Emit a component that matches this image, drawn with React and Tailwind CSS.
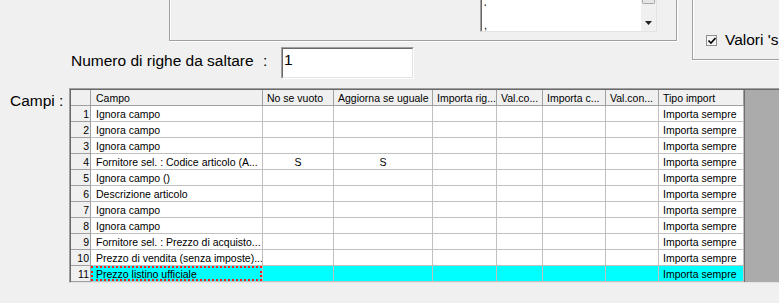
import React from "react";

const cols = [
  { w: "w-[172px]", label: "Campo", pl: "pl-[5px]" },
  { w: "w-[71px]", label: "No se vuoto", pl: "pl-[4px]" },
  { w: "w-[99px]", label: "Aggiorna se uguale", pl: "pl-[4px]" },
  { w: "w-[64px]", label: "Importa rig...", pl: "pl-[4px]" },
  { w: "w-[46px]", label: "Val.co...", pl: "pl-[4px]" },
  { w: "w-[63px]", label: "Importa c...", pl: "pl-[4px]" },
  { w: "w-[53px]", label: "Val.con...", pl: "pl-[4px]" },
  { w: "w-[85px]", label: "Tipo import", pl: "pl-[4px]" },
];

const rows = [
  ["Ignora campo", "", ""],
  ["Ignora campo", "", ""],
  ["Ignora campo", "", ""],
  ["Fornitore sel. : Codice articolo (A...", "S", "S"],
  ["Ignora campo ()", "", ""],
  ["Descrizione articolo", "", ""],
  ["Ignora campo", "", ""],
  ["Ignora campo", "", ""],
  ["Fornitore sel. : Prezzo di acquisto...", "", ""],
  ["Prezzo di vendita (senza imposte)...", "", ""],
  ["Prezzo listino ufficiale", "", ""],
];

function HeaderRow() {
  return (
    <div className="flex h-[16px]">
      <div className="w-[20px] shrink-0 border-r border-b border-[#a0a0a0] bg-[#f0f0f0]" />
      {cols.map((c, i) => (
        <div
          key={i}
          className={`${c.w} ${c.pl} shrink-0 border-r border-b border-[#a0a0a0] bg-[#f0f0f0] leading-[16px] whitespace-nowrap overflow-hidden`}
        >
          {c.label}
        </div>
      ))}
    </div>
  );
}

function DataRow({ n, r }) {
  const sel = n === 11;
  const bg = sel ? "bg-[#00ffff]" : "bg-white";
  const [campo, a, b] = r;
  return (
    <div className="flex h-[16px]">
      <div className="w-[20px] shrink-0 border-r border-b border-[#a0a0a0] bg-[#f0f0f0] text-right pr-[1px] leading-[16px]">
        {n}
      </div>
      <div className={`w-[172px] shrink-0 border-r border-b border-[#c0c0c0] ${bg} whitespace-nowrap overflow-hidden`}>
        {sel ? (
          <div className="h-[15px] border-2 border-dotted border-[#ff1a1a] pl-[3px] leading-[12px]">{campo}</div>
        ) : (
          <div className="pl-[5px] leading-[16px]">{campo}</div>
        )}
      </div>
      <div className={`w-[71px] shrink-0 border-r border-b border-[#c0c0c0] ${bg} text-center leading-[16px]`}>{a}</div>
      <div className={`w-[99px] shrink-0 border-r border-b border-[#c0c0c0] ${bg} text-center leading-[16px]`}>{b}</div>
      <div className={`w-[64px] shrink-0 border-r border-b border-[#c0c0c0] ${bg}`} />
      <div className={`w-[46px] shrink-0 border-r border-b border-[#c0c0c0] ${bg}`} />
      <div className={`w-[63px] shrink-0 border-r border-b border-[#c0c0c0] ${bg}`} />
      <div className={`w-[53px] shrink-0 border-r border-b border-[#c0c0c0] ${bg}`} />
      <div className={`w-[85px] shrink-0 border-r border-b border-[#c0c0c0] ${bg} pl-[4px] leading-[16px] whitespace-nowrap`}>
        Importa sempre
      </div>
    </div>
  );
}

export default function App() {
  return (
    <div className="w-[779px] h-[303px] overflow-hidden bg-[#f0f0f0] text-black font-['Liberation_Sans',Arial,sans-serif]">
      {/* top area */}
      <div className="flex h-[88px]">
        <div className="w-[692px] shrink-0 flex flex-col">
          <div className="flex h-[42px]">
            <div className="w-[169px] shrink-0" />
            <div className="w-[508px] h-[41px] border-l border-r border-b border-[#a0a0a0] shadow-[inset_1px_0_0_#fff,1px_1px_0_#fff] flex">
              <div className="ml-[310px] w-[177px] h-[32px] flex bg-white border-l border-r border-b border-l-[#a0a0a0] border-r-[#e3e3e3] border-b-[#e3e3e3]">
                <div className="w-[160px] border-l border-[#696969] flex flex-col pl-[2px] text-[11px] leading-[11px]">
                  <span className="mt-[3px]">&#8216;</span>
                  <span className="mt-[6px]">,</span>
                </div>
                <div className="w-[15px] flex flex-col bg-[#f0f0f0]">
                  <div className="h-[4px] mx-[1px] bg-[#e6e6e6] border-x border-b border-[#a9a9a9] rounded-b-[2px]" />
                  <div className="flex-1" />
                  <div className="h-[16px] flex items-center justify-center">
                    <svg width="7" height="4" viewBox="0 0 7 4">
                      <path d="M0 0H7L3.5 4Z" fill="#222" />
                    </svg>
                  </div>
                </div>
              </div>
            </div>
          </div>
          <div className="flex items-start mt-[5px] pl-[71px] text-[15.5px] leading-[18px]">
            <span className="w-[192px] shrink-0 mt-[5px] whitespace-nowrap">Numero di righe da saltare</span>
            <span className="w-[18px] shrink-0 mt-[5px]">:</span>
            <div className="w-[133px] h-[32px] border-t border-l border-[#a0a0a0] border-r border-b border-r-white border-b-white">
              <div className="h-full bg-white border-t border-l border-[#696969] border-r border-b border-r-[#e3e3e3] border-b-[#e3e3e3] pl-[1px] pt-[2px]">
                1
              </div>
            </div>
          </div>
        </div>
        <div className="flex-1 h-[60px] border-l border-b border-[#a0a0a0] shadow-[inset_1px_0_0_#fff,0_1px_0_#fff] flex items-start pl-[13px] pt-[31px]">
          <div className="mt-[4px] w-[11px] h-[11px] shrink-0 border border-[#8e8f8f] bg-[#f4f4f4] flex items-center justify-center">
            <svg width="8" height="7" viewBox="0 0 8 7">
              <path d="M0.5 3.5L3 6L7.5 1" stroke="#000" strokeWidth="1.6" fill="none" />
            </svg>
          </div>
          <span className="ml-[8px] text-[15.5px] leading-[18px] whitespace-nowrap">Valori 's</span>
        </div>
      </div>

      {/* grid area */}
      <div className="flex">
        <div className="w-[69px] shrink-0 pl-[10px] pt-[4px] text-[15.5px] leading-[18px] whitespace-nowrap">Campi :</div>
        <div className="flex-1 border-t border-l border-b border-[#a0a0a0] border-b-[#e3e3e3]">
          <div className="border-t border-l border-[#696969] flex text-[10.5px]">
            <div className="w-[673px] shrink-0 flex flex-col">
              <HeaderRow />
              {rows.map((r, i) => (
                <DataRow key={i} n={i + 1} r={r} />
              ))}
            </div>
            <div className="flex-1 bg-[#ababab] border-l border-[#6d6d6d]" />
          </div>
        </div>
      </div>
    </div>
  );
}
